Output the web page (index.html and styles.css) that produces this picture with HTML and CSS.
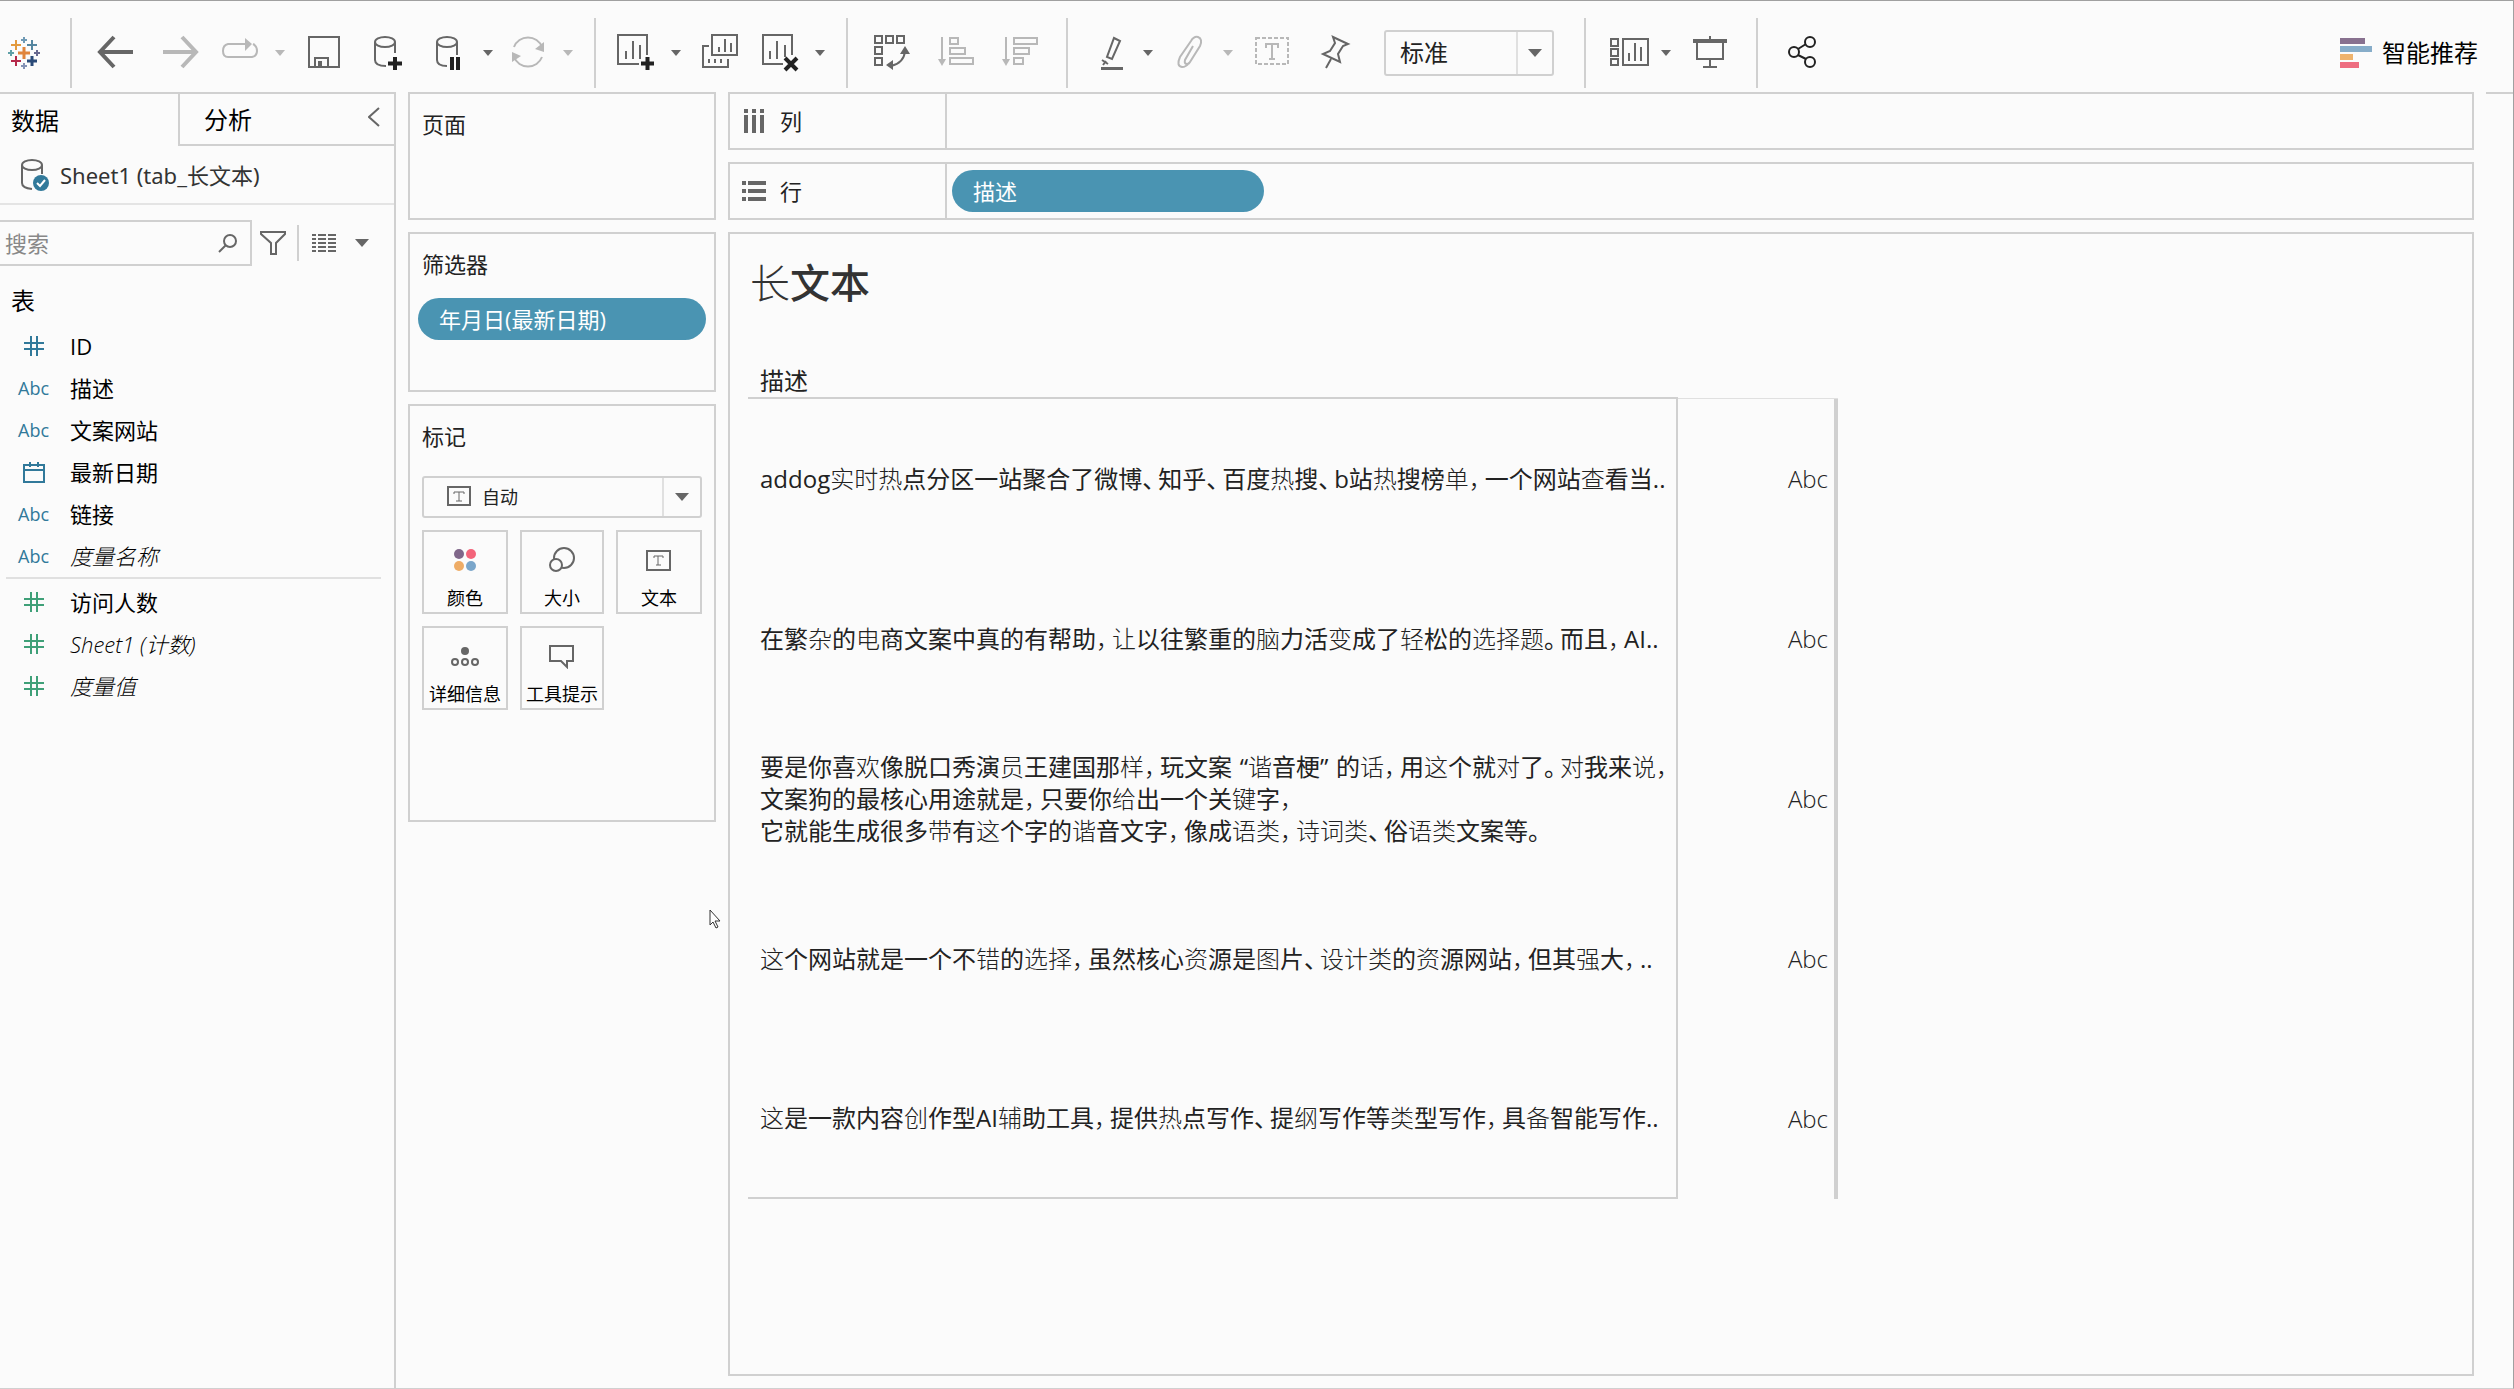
FILE: index.html
```html
<!DOCTYPE html>
<html lang="zh-CN">
<head>
<meta charset="utf-8">
<title>长文本</title>
<link rel="stylesheet" href="styles.css">
</head>
<body>
<header class="toolbar">
  <a class="logo" href="#" aria-label="起始页"><svg width="34" height="34" viewBox="0 0 34 34" fill="none" stroke-width="2">
    <path d="M17 11v12M11 17h12" stroke="#e0853d" stroke-width="3"/>
    <path d="M9 4v10M4 9h10" stroke="#e39a3e" stroke-width="2"/><path d="M25 4v10M20 9h10" stroke="#5586a0"/>
    <path d="M9 20v10M4 25h10" stroke="#b5294a"/><path d="M25 20v10M20 25h10" stroke="#2a4a78" stroke-width="3"/>
    <path d="M17 1v6M14 4h6" stroke="#6f9ab5"/><path d="M17 27v6M14 30h6" stroke="#8492b5"/>
    <path d="M4 14v6M1 17h6" stroke="#5fa0a8"/><path d="M30 14v6M27 17h6" stroke="#68698f"/></svg></a>
  <span class="sep"></span>
  <button class="tool" aria-label="撤消"><svg class="ico" viewBox="0 0 40 40"><path d="M37 19H5M18 4L4 19l14 15" stroke-width="4"/></svg></button>
  <button class="tool off" aria-label="重做"><svg class="ico" viewBox="0 0 40 40"><path d="M3 19h32M22 4l14 15-14 15" stroke-width="4"/></svg></button>
  <button class="tool slim off" aria-label="重播动画"><svg class="ico" viewBox="0 0 40 40"><path d="M25 11H8q-5 1-5 7t5 6h24q5-1 5-6t-4-7"/><path class="solid" d="M25 5l7 6-7 7z"/></svg></button>
  <button class="drop off" aria-label="动画选项"><span class="caret"></span></button>
  <button class="tool" aria-label="保存"><svg class="ico" viewBox="0 0 40 40"><path d="M5 4h30v30H5zM11 34v-9h13v9"/><path class="solid" d="M14 28h4v6h-4z"/></svg></button>
  <button class="tool" aria-label="新建数据源"><svg class="ico" viewBox="0 0 40 40"><ellipse cx="17" cy="9" rx="10" ry="5"/><path d="M7 9v18q0 6 11 6M27 9v11"/><path class="dark" d="M27 24v13M20 30.500h14"/></svg></button>
  <button class="tool slim" aria-label="暂停自动更新"><svg class="ico" viewBox="0 0 40 40"><ellipse cx="19" cy="9" rx="10" ry="5"/><path d="M9 9v18q0 6 10 6M29 9v13"/><path class="dark" d="M24 24v13M30 24v13"/></svg></button>
  <button class="drop" aria-label="更新选项"><span class="caret"></span></button>
  <button class="tool slim off" aria-label="运行更新"><svg class="ico" viewBox="0 0 40 40"><path d="M6 14a15 15 0 0 1 28 0M34 24a15 15 0 0 1-28 0"/><path class="solid" d="M36 9v10l-9-3zM4 29V19l9 4z"/></svg></button>
  <button class="drop off" aria-label="运行选项"><span class="caret"></span></button>
  <span class="sep"></span>
  <button class="tool slim" aria-label="新建工作表"><svg class="ico" viewBox="0 0 40 40"><path d="M23 31H2V2h29v20M10 18v8M17 8v18M24 12v14"/><path class="dark" d="M31.500 24v13M25 30.500h13"/></svg></button>
  <button class="drop" aria-label="新建选项"><span class="caret"></span></button>
  <button class="tool" aria-label="复制工作表"><svg class="ico" viewBox="0 0 40 40"><path d="M12 2h25v20H12zM19 14v5M25 6v13M31 10v9M9 13H3v21h25v-8M9 26v4M15 26v4M21 26v4"/></svg></button>
  <button class="tool slim" aria-label="清除工作表"><svg class="ico" viewBox="0 0 40 40"><path d="M23 31H3V2h29v20M10 18v8M17 8v18M25 12v12"/><path class="dark" d="M25 25l12 12M37 25L25 37"/></svg></button>
  <button class="drop" aria-label="清除选项"><span class="caret"></span></button>
  <span class="sep"></span>
  <button class="tool" aria-label="交换行和列"><svg class="ico" viewBox="0 0 40 40"><path d="M3 3h7v7H3zM14 3h7v7h-7zM25 3h7v7h-7zM3 14h7v7H3zM3 25h7v7H3zM33 18q-1 12-14 15"/><path class="solid" d="M28 21l5-8 5 8zM21 27v10l-7-5z"/></svg></button>
  <button class="tool off" aria-label="升序排序"><svg class="ico" viewBox="0 0 40 40"><path d="M6 4v25M14 5h8v6h-8zM14 15h15v6H14zM14 25h23v6H14z"/><path class="solid" d="M2 26h8l-4 7z"/></svg></button>
  <button class="tool off" aria-label="降序排序"><svg class="ico" viewBox="0 0 40 40"><path d="M6 4v25M14 5h23v6H14zM14 15h15v6H14zM14 25h9v6h-9z"/><path class="solid" d="M2 26h8l-4 7z"/></svg></button>
  <span class="sep"></span>
  <button class="tool slim" aria-label="突出显示"><svg class="ico" viewBox="0 0 40 40"><path d="M26 5l6 3-8 18-5-2zM14 27l6 4M15 32l3-4"/><path d="M13 35.500h22" stroke-width="3"/></svg></button>
  <button class="drop" aria-label="突出显示选项"><span class="caret"></span></button>
  <button class="tool slim off" aria-label="分组成员"><svg class="ico" viewBox="0 0 40 40"><path d="M25 13l-8 14q-1 4 2 4 2 0 3-2l10-16q3-7-2-9-4-1-7 4L12 24q-4 9 2 10 4 0 7-4"/></svg></button>
  <button class="drop off" aria-label="分组选项"><span class="caret"></span></button>
  <button class="tool off" aria-label="显示标记标签"><svg class="ico" viewBox="0 0 40 40"><path d="M4 5h32v26H4z" stroke-dasharray="4 2"/><path d="M14 15v-4h12v4M20 11v15M17 26h6"/></svg></button>
  <button class="tool" aria-label="固定轴"><svg class="ico" viewBox="0 0 40 40"><path d="M17 4l15 7-5 2-5 8 2 8-17-8 7-3 5-8zM15 26l-5 9"/></svg></button>
  <div class="picker fit">
    <select aria-label="适合"><option>标准</option></select><span class="picker-end"><span class="caret big"></span></span>
  </div>
  <span class="sep"></span>
  <button class="tool slim" aria-label="显示/隐藏功能区"><svg class="ico" viewBox="0 0 40 40"><path d="M5 6h7v7H5zM5 16h7v7H5zM5 26h7v6H5zM17 6h25v26H17zM23 20v8M29 10v18M35 14v14"/></svg></button>
  <button class="drop" aria-label="功能区选项"><span class="caret"></span></button>
  <button class="tool" aria-label="演示模式"><svg class="ico" viewBox="0 0 40 40"><path d="M7 10v16h26V10M20 3v4M20 26v8M13 34h14"/><path d="M3 8h34" stroke-width="4"/></svg></button>
  <span class="sep"></span>
  <button class="tool" aria-label="共享"><svg class="ico ink" viewBox="0 0 40 40"><circle cx="12" cy="19" r="5"/><circle cx="28" cy="9" r="5"/><circle cx="28" cy="29" r="5"/><path d="M16 16l8-5M16 22l8 4"/></svg></button>
  <button class="showme"><svg width="32" height="30" viewBox="0 0 32 30"><path fill="#88718f" d="M0 0h25v6H0z"/><path fill="#87adc9" d="M0 8h32v6H0z"/><path fill="#eeb36d" d="M0 16h13v6H0z"/><path fill="#ee6d80" d="M0 24h19v6H0z"/></svg>智能推荐</button>
</header>

<main class="workspace">
  <aside class="data-pane">
    <div class="tabs">
      <button class="tab current">数据</button>
      <div class="tab-rest"><button class="tab">分析</button>
      <button class="collapse" aria-label="折叠"><svg width="12" height="20" viewBox="0 0 12 20" fill="none" stroke="#666" stroke-width="2"><path d="M11 1L1 10l10 9"/></svg></button></div>
    </div>
    <a class="source" href="#"><svg width="30" height="32" viewBox="0 0 30 32" fill="none" stroke="#666" stroke-width="2"><ellipse cx="12" cy="6" rx="10" ry="5"/><path d="M2 6v18q0 5 10 6M22 6v9"/><circle cx="21" cy="24" r="8" fill="#31799a" stroke="none"/><path d="M17 24l3 3 5-6" stroke="#fff"/></svg>Sheet1 (tab_长文本)</a>
    <div class="search-row">
      <label class="search"><input type="text" placeholder="搜索" aria-label="搜索"><svg width="20" height="20" viewBox="0 0 20 20" fill="none" stroke="#666" stroke-width="2"><circle cx="12" cy="8" r="6"/><path d="M8 12l-7 7"/></svg></label>
      <button class="plain" aria-label="筛选"><svg width="28" height="26" viewBox="0 0 28 26" fill="none" stroke="#666" stroke-width="2"><path d="M2 2h24v2l-9 9v11h-5V13L2 4z"/></svg></button>
      <span class="mini-sep"></span>
      <button class="plain view" aria-label="视图"><svg width="24" height="18" viewBox="0 0 24 18" stroke="#666" stroke-width="2"><path d="M0 1h4M6 1h8M16 1h8M0 5h4M6 5h8M16 5h8M0 9h4M6 9h8M16 9h8M0 13h4M6 13h8M16 13h8M0 17h4M6 17h8M16 17h8"/></svg></button>
      <button class="plain more" aria-label="更多"><span class="caret big"></span></button>
    </div>
    <h2 class="tables-title">表</h2>
    <ul class="fields dims">
      <li><svg class="hash" viewBox="0 0 20 20"><path d="M7 0v20M13 0v20M0 7h20M0 13h20"/></svg>ID</li>
      <li><span class="type">Abc</span>描述</li>
      <li><span class="type">Abc</span>文案网站</li>
      <li><svg class="hash" viewBox="0 0 20 20"><path d="M0 3h20v17H0zM0 8h20M6 0v5M14 0v5"/></svg>最新日期</li>
      <li><span class="type">Abc</span>链接</li>
      <li class="auto"><span class="type">Abc</span>度量名称</li>
    </ul>
    <ul class="fields measures">
      <li><svg class="hash" viewBox="0 0 20 20"><path d="M7 0v20M13 0v20M0 7h20M0 13h20"/></svg>访问人数</li>
      <li class="auto"><svg class="hash" viewBox="0 0 20 20"><path d="M7 0v20M13 0v20M0 7h20M0 13h20"/></svg>Sheet1 (计数)</li>
      <li class="auto"><svg class="hash" viewBox="0 0 20 20"><path d="M7 0v20M13 0v20M0 7h20M0 13h20"/></svg>度量值</li>
    </ul>
  </aside>

  <div class="cards">
    <section class="card pages"><h3>页面</h3></section>
    <section class="card filters"><h3>筛选器</h3><button class="pill">年月日(最新日期)</button></section>
    <section class="card marks">
      <h3>标记</h3>
      <div class="picker mark-type">
        <svg class="mark-ico" width="24" height="20" viewBox="0 0 24 20" fill="none" stroke="#666" stroke-width="2"><path d="M1 1h22v18H1z"/><path d="M7 8V6h10v2M12 6v9M9 15h6" stroke-width="1"/></svg>
        <select aria-label="标记类型"><option>自动</option></select><span class="picker-end"><span class="caret big"></span></span>
      </div>
      <div class="mark-grid">
        <button><svg width="28" height="26" viewBox="0 0 28 26"><circle cx="8" cy="7" r="5" fill="#80678a"/><circle cx="20" cy="7" r="5" fill="#f3647a"/><circle cx="8" cy="19" r="5" fill="#eeac66"/><circle cx="20" cy="19" r="5" fill="#7aa6ca"/></svg>颜色</button>
        <button><svg width="28" height="26" viewBox="0 0 28 26" fill="#fbfbfb" stroke="#666" stroke-width="2"><circle cx="16" cy="11" r="10"/><circle cx="8" cy="18" r="6"/></svg>大小</button>
        <button><svg width="28" height="26" viewBox="0 0 28 26" fill="none" stroke="#666" stroke-width="2"><path d="M2 4h23v19H2z"/><path d="M9 11V9h9v2M13 9v9M11 18h5" stroke-width="1"/></svg>文本</button>
        <button><svg width="28" height="26" viewBox="0 0 28 26" fill="none" stroke="#666" stroke-width="2"><circle cx="14" cy="8" r="4" fill="#666" stroke="none"/><circle cx="4" cy="19" r="3"/><circle cx="14" cy="19" r="3"/><circle cx="24" cy="19" r="3"/></svg>详细信息</button>
        <button><svg width="28" height="26" viewBox="0 0 28 26" fill="none" stroke="#666" stroke-width="2"><path d="M2 3h23v15h-6v6l-6-6H2z"/></svg>工具提示</button>
      </div>
    </section>
  </div>

  <div class="view-pane">
    <section class="shelf"><h3><svg width="26" height="24" viewBox="0 0 26 24" fill="#666"><path d="M2 0h4v4H2zM10 0h4v4h-4zM18 0h4v4h-4zM2 6h4v18H2zM10 6h4v18h-4zM18 6h4v18h-4z"/></svg>列</h3></section>
    <section class="shelf"><h3><svg width="26" height="24" viewBox="0 0 26 24" fill="#666"><path d="M0 2h4v4H0zM0 10h4v4H0zM0 18h4v4H0zM6 2h18v4H6zM6 10h18v4H6zM6 18h18v4H6z"/></svg>行</h3><button class="pill">描述</button></section>
    <section class="sheet">
      <h1><span class="lt">长</span>文本</h1>
      <table>
        <thead><tr><th>描述</th><th></th></tr></thead>
        <tbody>
          <tr><td>addog<span class="lt">实时热</span>点分区一站聚合了微博<span class="pn">、</span>知乎<span class="pn">、</span>百度<span class="lt">热</span>搜<span class="pn">、</span>b站<span class="lt">热</span>搜榜<span class="lt">单<span class="pn">，</span></span>一个网站<span class="lt">查</span>看当..</td><td>Abc</td></tr>
          <tr><td>在繁<span class="lt">杂</span>的<span class="lt">电</span>商文案中真的有帮助<span class="lt"><span class="pn">，</span>让</span>以往繁重的<span class="lt">脑</span>力活<span class="lt">变</span>成了<span class="lt">轻</span>松的<span class="lt">选择题</span><span class="pn">。</span>而且<span class="lt"><span class="pn">，</span></span>AI..</td><td>Abc</td></tr>
          <tr><td>要是你喜<span class="lt">欢</span>像脱口秀演<span class="lt">员</span>王建国那<span class="lt">样<span class="pn">，</span></span>玩文案<span class="pn open">“</span><span class="lt">谐</span>音梗<span class="pn">”</span>的<span class="lt">话<span class="pn">，</span></span>用<span class="lt">这</span>个就<span class="lt">对</span>了<span class="pn">。</span><span class="lt">对</span>我来<span class="lt">说<span class="pn">，</span></span><br>文案狗的最核心用途就是<span class="lt"><span class="pn">，</span></span>只要你<span class="lt">给</span>出一个关<span class="lt">键</span>字<span class="lt"><span class="pn">，</span></span><br>它就能生成很多<span class="lt">带</span>有<span class="lt">这</span>个字的<span class="lt">谐</span>音文字<span class="lt"><span class="pn">，</span></span>像成<span class="lt">语类<span class="pn">，</span>诗词类</span><span class="pn">、</span>俗<span class="lt">语类</span>文案等<span class="pn">。</span></td><td>Abc</td></tr>
          <tr><td><span class="lt">这</span>个网站就是一个不<span class="lt">错</span>的<span class="lt">选择<span class="pn">，</span></span>虽然核心<span class="lt">资</span>源是<span class="lt">图</span>片<span class="pn">、</span><span class="lt">设计类</span>的<span class="lt">资</span>源网站<span class="lt"><span class="pn">，</span></span>但其<span class="lt">强</span>大<span class="lt"><span class="pn">，</span></span>..</td><td>Abc</td></tr>
          <tr><td><span class="lt">这</span>是一款内容<span class="lt">创</span>作型AI<span class="lt">辅</span>助工具<span class="lt"><span class="pn">，</span></span>提供<span class="lt">热</span>点写作<span class="pn">、</span>提<span class="lt">纲</span>写作等<span class="lt">类</span>型写作<span class="lt"><span class="pn">，</span></span>具<span class="lt">备</span>智能写作..</td><td>Abc</td></tr>
        </tbody>
      </table>
    </section>
  </div>
  <div class="edge"></div>
</main>
<svg class="cursor" width="12" height="20" viewBox="0 0 12 20" fill="#fff" stroke="#333"><path d="M1 1v15l3-3 3 6 2-1-3-6h5z"/></svg>
</body>
</html>
```
FILE: styles.css
```css
* { box-sizing: border-box; }
body {
  margin: 0;
  min-height: 100vh;
  display: flex;
  flex-direction: column;
  position: relative;
  background: #fbfbfb;
  color: #222;
  font: 22px/32px "Open Sans", "Noto Sans CJK SC", sans-serif;
  border: 1px solid #d0d0d0;
  border-top-color: #a0a0a0;
  border-right-color: #a0a0a0;
  border-left: 0;
}
button, input, select {
  font: inherit;
  color: inherit;
  background: none;
  border: 0;
  border-radius: 0;
  padding: 0;
  margin: 0;
}
h1, h2, h3, ul { margin: 0; padding: 0; font-weight: 400; font-size: inherit; }
a { color: inherit; text-decoration: none; }
svg { flex: none; display: block; }

.toolbar { display: flex; align-items: center; height: 91px; padding-top: 13px; }
.logo { width: 56px; padding-left: 7px; }
.sep { width: 2px; height: 70px; margin: 0 12px 0 14px; background: #d0d0d0; }
.tool { width: 64px; height: 48px; display: flex; justify-content: center; align-items: center; }
.tool.slim { width: 56px; }
.drop { width: 24px; height: 48px; display: flex; justify-content: center; align-items: center; }
.ico { width: 40px; height: 40px; fill: none; stroke: #666; stroke-width: 2; overflow: visible; }
.ico .solid { fill: #666; stroke: none; }
.ico .dark { stroke: #222; stroke-width: 4; }
.ico.ink { stroke: #222; }
.off .ico { stroke: #b8b8b8; }
.off .ico .solid { fill: #b8b8b8; }
.caret { border: 5px solid transparent; border-top: 6px solid #666; border-bottom: 0; }
.caret.big { border-width: 8px 7px 0; }
.off .caret { border-top-color: #b8b8b8; }
.picker { display: flex; align-items: stretch; position: relative; border: 2px solid #d0d0d0; border-radius: 3px; }
.picker select { flex: 1; appearance: none; min-width: 0; }
.picker-end { display: flex; align-items: center; justify-content: center; border-left: 2px solid #e0e0e0; pointer-events: none; }
.fit { width: 170px; height: 46px; margin: 0 16px; font-size: 24px; }
.fit select { padding-left: 14px; }
.fit .picker-end { width: 36px; }
.showme { display: flex; align-items: center; gap: 10px; margin-left: auto; margin-right: 35px; font-size: 24px; color: #000; }

.workspace { flex: 1; display: grid; grid-template-columns: 396px 308px 1fr 27px; column-gap: 12px; }
.data-pane { border-top: 2px solid #d0d0d0; border-right: 2px solid #d0d0d0; color: #000; }
.tabs { display: flex; font-size: 24px; height: 52px; }
.tab { text-align: left; padding-top: 2px; }
.tab.current { width: 178px; padding-left: 11px; }
.tab-rest { flex: 1; display: flex; justify-content: space-between; padding: 0 14px 0 24px; border-left: 2px solid #d0d0d0; border-bottom: 2px solid #d0d0d0; }
.collapse { padding-bottom: 4px; }
.source { display: flex; align-items: center; gap: 10px; height: 59px; padding-left: 20px; color: #333; font-family: "Noto Sans", "Noto Sans CJK SC", sans-serif; border-bottom: 2px solid #e4e4e4; }
.search-row { display: flex; align-items: center; margin-top: 15px; }
.search { display: flex; align-items: center; width: 252px; height: 46px; padding: 0 12px 0 5px; border: 2px solid #d0d0d0; border-left: 0; }
.search input { flex: 1; min-width: 0; outline: 0; }
.search input::placeholder { color: #888; opacity: 1; }
.plain { margin-left: 7px; }
.mini-sep { width: 2px; height: 36px; margin-left: 10px; background: #d0d0d0; }
.plain.view { margin-left: 13px; }
.plain.more { display: flex; margin-left: 19px; }
.tables-title { margin: 19px 0 8px; padding-left: 11px; font-size: 24px; }
.fields { list-style: none; }
.fields li { display: flex; align-items: center; gap: 21px; height: 42px; padding-left: 18px; }
.type { width: 31px; font-size: 18px; }
.hash { width: 20px; height: 20px; margin: 0 5px 0 6px; overflow: visible; fill: none; stroke: currentColor; stroke-width: 2; }
.dims { margin: 0 13px 0 6px; border-bottom: 2px solid #e0e0e0; }
.dims li { padding-left: 12px; }
.dims .type, .dims .hash { color: #31799a; }
.measures { padding-top: 2px; }
.measures .hash { color: #3fa078; }
.auto { font-style: italic; font-weight: 300; }
.auto .type { font-style: normal; font-weight: 400; }

.cards { display: flex; flex-direction: column; gap: 12px; }
.card { border: 2px solid #d0d0d0; padding: 14px 12px 0; }
.pages { height: 128px; }
.filters { height: 160px; padding: 14px 8px 0; }
.filters h3 { padding-left: 4px; }
.marks { height: 418px; }
.pill { height: 42px; border-radius: 21px; background: #4a94b2; color: #fff; text-align: left; padding-left: 21px; }
.filters .pill { width: 100%; margin-top: 18px; }
.mark-type { height: 42px; margin-top: 24px; font-size: 18px; }
.mark-ico { margin: 8px 11px 0 23px; }
.mark-type .picker-end { width: 38px; }
.mark-grid { display: grid; grid-template-columns: 86px 84px 86px; justify-content: space-between; gap: 12px; margin-top: 12px; }
.mark-grid button { display: flex; flex-direction: column; align-items: center; height: 84px; padding-top: 15px; border: 2px solid #d0d0d0; font-size: 18px; line-height: 24px; gap: 13px; color: #000; white-space: nowrap; }

.view-pane { display: flex; flex-direction: column; gap: 12px; padding-bottom: 12px; min-width: 0; }
.shelf { display: flex; align-items: center; height: 58px; border: 2px solid #d0d0d0; }
.shelf h3 { display: flex; align-items: center; align-self: stretch; gap: 12px; width: 217px; padding-left: 12px; border-right: 2px solid #d0d0d0; }
.shelf .pill { width: 312px; margin-left: 5px; }
.sheet { flex: 1; border: 2px solid #d0d0d0; padding: 21px 18px 0; }
.sheet h1 { font-size: 40px; line-height: 56px; padding-left: 2px; font-weight: 500; color: #333; }
.sheet table { margin-top: 53px; width: 1090px; table-layout: fixed; border-spacing: 0; font-size: 24px; color: #222; }
th { height: 35px; padding: 0 0 0 12px; text-align: left; font-weight: 400; line-height: 32px; border-bottom: 2px solid #d0d0d0; }
th:first-child { width: 930px; }
th:last-child { border-bottom: 1px solid #e0e0e0; }
td { height: 160px; padding: 0; white-space: nowrap; }
td:first-child { padding-left: 12px; border-right: 2px solid #d0d0d0; }
td:last-child { padding-right: 6px; text-align: right; font-weight: 300; border-right: 4px solid #d0d0d0; }
tr:last-child td:first-child { border-bottom: 2px solid #d0d0d0; }
.lt { font-weight: 300; }
/* Half-width punctuation: the glyph keeps only its inked half */
.pn { display: inline-block; width: 16px; text-align: left; font-feature-settings: "halt"; }
.pn.open { text-align: right; }
.edge { border-top: 2px solid #d0d0d0; height: 2px; }
.cursor { position: absolute; left: 709px; top: 908px; }
```
